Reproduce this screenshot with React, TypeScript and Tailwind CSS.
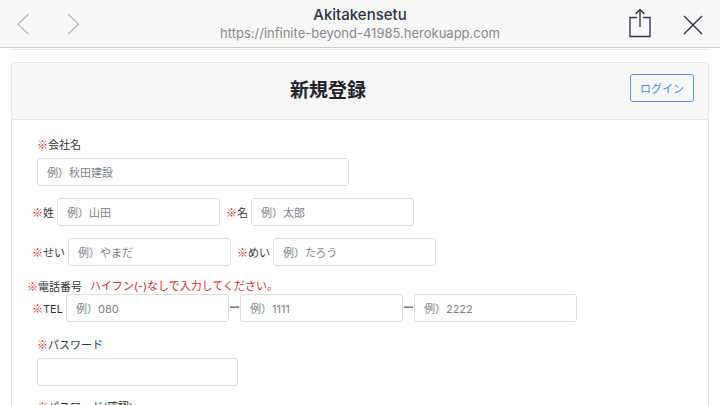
import { clsx } from "clsx";
import type { ReactNode } from "react";

type FieldProps = {
  id: string;
  placeholder?: string;
  type?: string;
  className?: string;
  label?: string;
};

function Required() {
  return <span className="font-['Noto_Sans_CJK_JP',sans-serif] text-[#c9302c]">※</span>;
}

function Label({ htmlFor, children }: { htmlFor: string; children: ReactNode }) {
  return (
    <label htmlFor={htmlFor} className="h-4 shrink-0 whitespace-nowrap">
      <Required />
      {children}
    </label>
  );
}

function Field({ id, placeholder, type = "text", className = "w-[163px]", label }: FieldProps) {
  return (
    <input
      id={id}
      name={id}
      type={type}
      placeholder={placeholder}
      aria-label={label}
      className={clsx(
        "h-7 rounded-[3px] border border-[#dcdde3] bg-white px-[9px] pt-px text-[11px] placeholder:text-[#7b7f85]",
        className,
      )}
    />
  );
}

function Dash() {
  return <span className="w-[11px] text-center font-bold text-[#777b7b]">ー</span>;
}

function BrowserBar() {
  return (
    <header className="grid h-12 shrink-0 grid-cols-[1fr_auto_1fr] items-center border-b border-[#c8c8ca] bg-[#f8f8f8] text-[#2b3245]">
      <div className="flex gap-[26px] pl-[11px] text-[#b3b3b8]">
        <button type="button" aria-label="戻る">
          <svg width="24" height="24" viewBox="0 0 24 24" fill="none" stroke="currentColor" strokeWidth="1.2">
            <path d="M17.5 2 7 12.2l10.5 10" />
          </svg>
        </button>
        <button type="button" aria-label="進む">
          <svg width="24" height="24" viewBox="0 0 24 24" fill="none" stroke="currentColor" strokeWidth="1.2">
            <path d="M7 2l10.5 10.2L7 22.2" />
          </svg>
        </button>
      </div>
      <div className="text-center">
        <p className="text-[15px] leading-[19px] font-medium">Akitakensetu</p>
        <p className="text-[13px] leading-[18px] text-[#85868c]">
          https://infinite-beyond-41985.herokuapp.com
        </p>
      </div>
      <div className="flex items-center justify-end gap-7 pr-4">
        <button type="button" aria-label="共有">
          <svg width="28" height="32" viewBox="0 0 28 32" fill="none" stroke="currentColor" strokeWidth="1.3">
            <path d="M11 9.5H4v19h20v-19h-7" />
            <path d="M14 19V1.5M9.5 6 14 1.5 18.5 6" />
          </svg>
        </button>
        <button type="button" aria-label="閉じる">
          <svg width="22" height="22" viewBox="0 0 22 22" fill="none" stroke="currentColor" strokeWidth="1.4">
            <path d="M2 3l18 18M20 3 2 21" />
          </svg>
        </button>
      </div>
    </header>
  );
}

export default function App() {
  return (
    <div className="flex h-screen flex-col overflow-hidden bg-white font-[Inter,'Noto_Sans_CJK_JP',sans-serif] text-[11px] leading-4 text-[#333639]">
      <BrowserBar />

      <main className="min-h-0 flex-1 overflow-hidden px-[11px] pt-px">
        <hr className="border-[#e6e6e6]" />

        <section className="mt-3 rounded-[3px] border border-[#e6e6e6]">
          <div className="flex items-start border-b border-[#e6e6e6] bg-[#f7f7f7] px-[14px] py-[11px]">
            <h1 className="flex-1 text-center text-[19px] leading-[34px] font-bold text-[#212529]">
              新規登録
            </h1>
            <a
              href="#login"
              className="rounded-[3px] border border-[#5b95dc] px-[9px] pt-[6px] pb-1 text-[#4a8ad8]"
            >
              ログイン
            </a>
          </div>

          <form className="px-[15px] pt-4 pb-6">
            <div className="flex flex-col items-start gap-[6px] px-[10px]">
              <Label htmlFor="company">会社名</Label>
              <Field id="company" placeholder="例）秋田建設" className="w-[312px]" />
            </div>

            <div className="mt-3 flex items-center px-[5px]">
              <div className="flex items-center gap-[3px]">
                <Label htmlFor="last-name">姓</Label>
                <Field id="last-name" placeholder="例）山田" />
              </div>
              <div className="ml-[6px] flex items-center gap-[3px]">
                <Label htmlFor="first-name">名</Label>
                <Field id="first-name" placeholder="例）太郎" />
              </div>
            </div>

            <div className="mt-3 flex items-center px-[5px]">
              <div className="flex items-center gap-[3px]">
                <Label htmlFor="last-kana">せい</Label>
                <Field id="last-kana" placeholder="例）やまだ" />
              </div>
              <div className="ml-[6px] flex items-center gap-[3px]">
                <Label htmlFor="first-kana">めい</Label>
                <Field id="first-kana" placeholder="例）たろう" />
              </div>
            </div>

            <p className="mt-3 flex h-4 gap-2">
              <span>
                <Required />
                電話番号
              </span>
              <span className="text-[#c9302c]">ハイフン(-)なしで入力してください。</span>
            </p>
            <div className="flex items-center px-[5px]">
              <div className="flex items-center gap-[3px]">
                <Label htmlFor="tel-area">TEL</Label>
                <Field id="tel-area" type="tel" placeholder="例）080" />
              </div>
              <Dash />
              <Field id="tel-local" type="tel" placeholder="例）1111" label="TEL 2" />
              <Dash />
              <Field id="tel-number" type="tel" placeholder="例）2222" label="TEL 3" />
            </div>

            <div className="mt-[14px] flex flex-col items-start gap-[6px] px-[10px]">
              <Label htmlFor="password">パスワード</Label>
              <Field id="password" type="password" className="w-[201px]" />
            </div>

            <div className="mt-3 flex flex-col items-start gap-[6px] px-[10px]">
              <Label htmlFor="password-confirm">パスワード(確認)</Label>
              <Field id="password-confirm" type="password" className="w-[201px]" />
            </div>
          </form>
        </section>
      </main>
    </div>
  );
}
